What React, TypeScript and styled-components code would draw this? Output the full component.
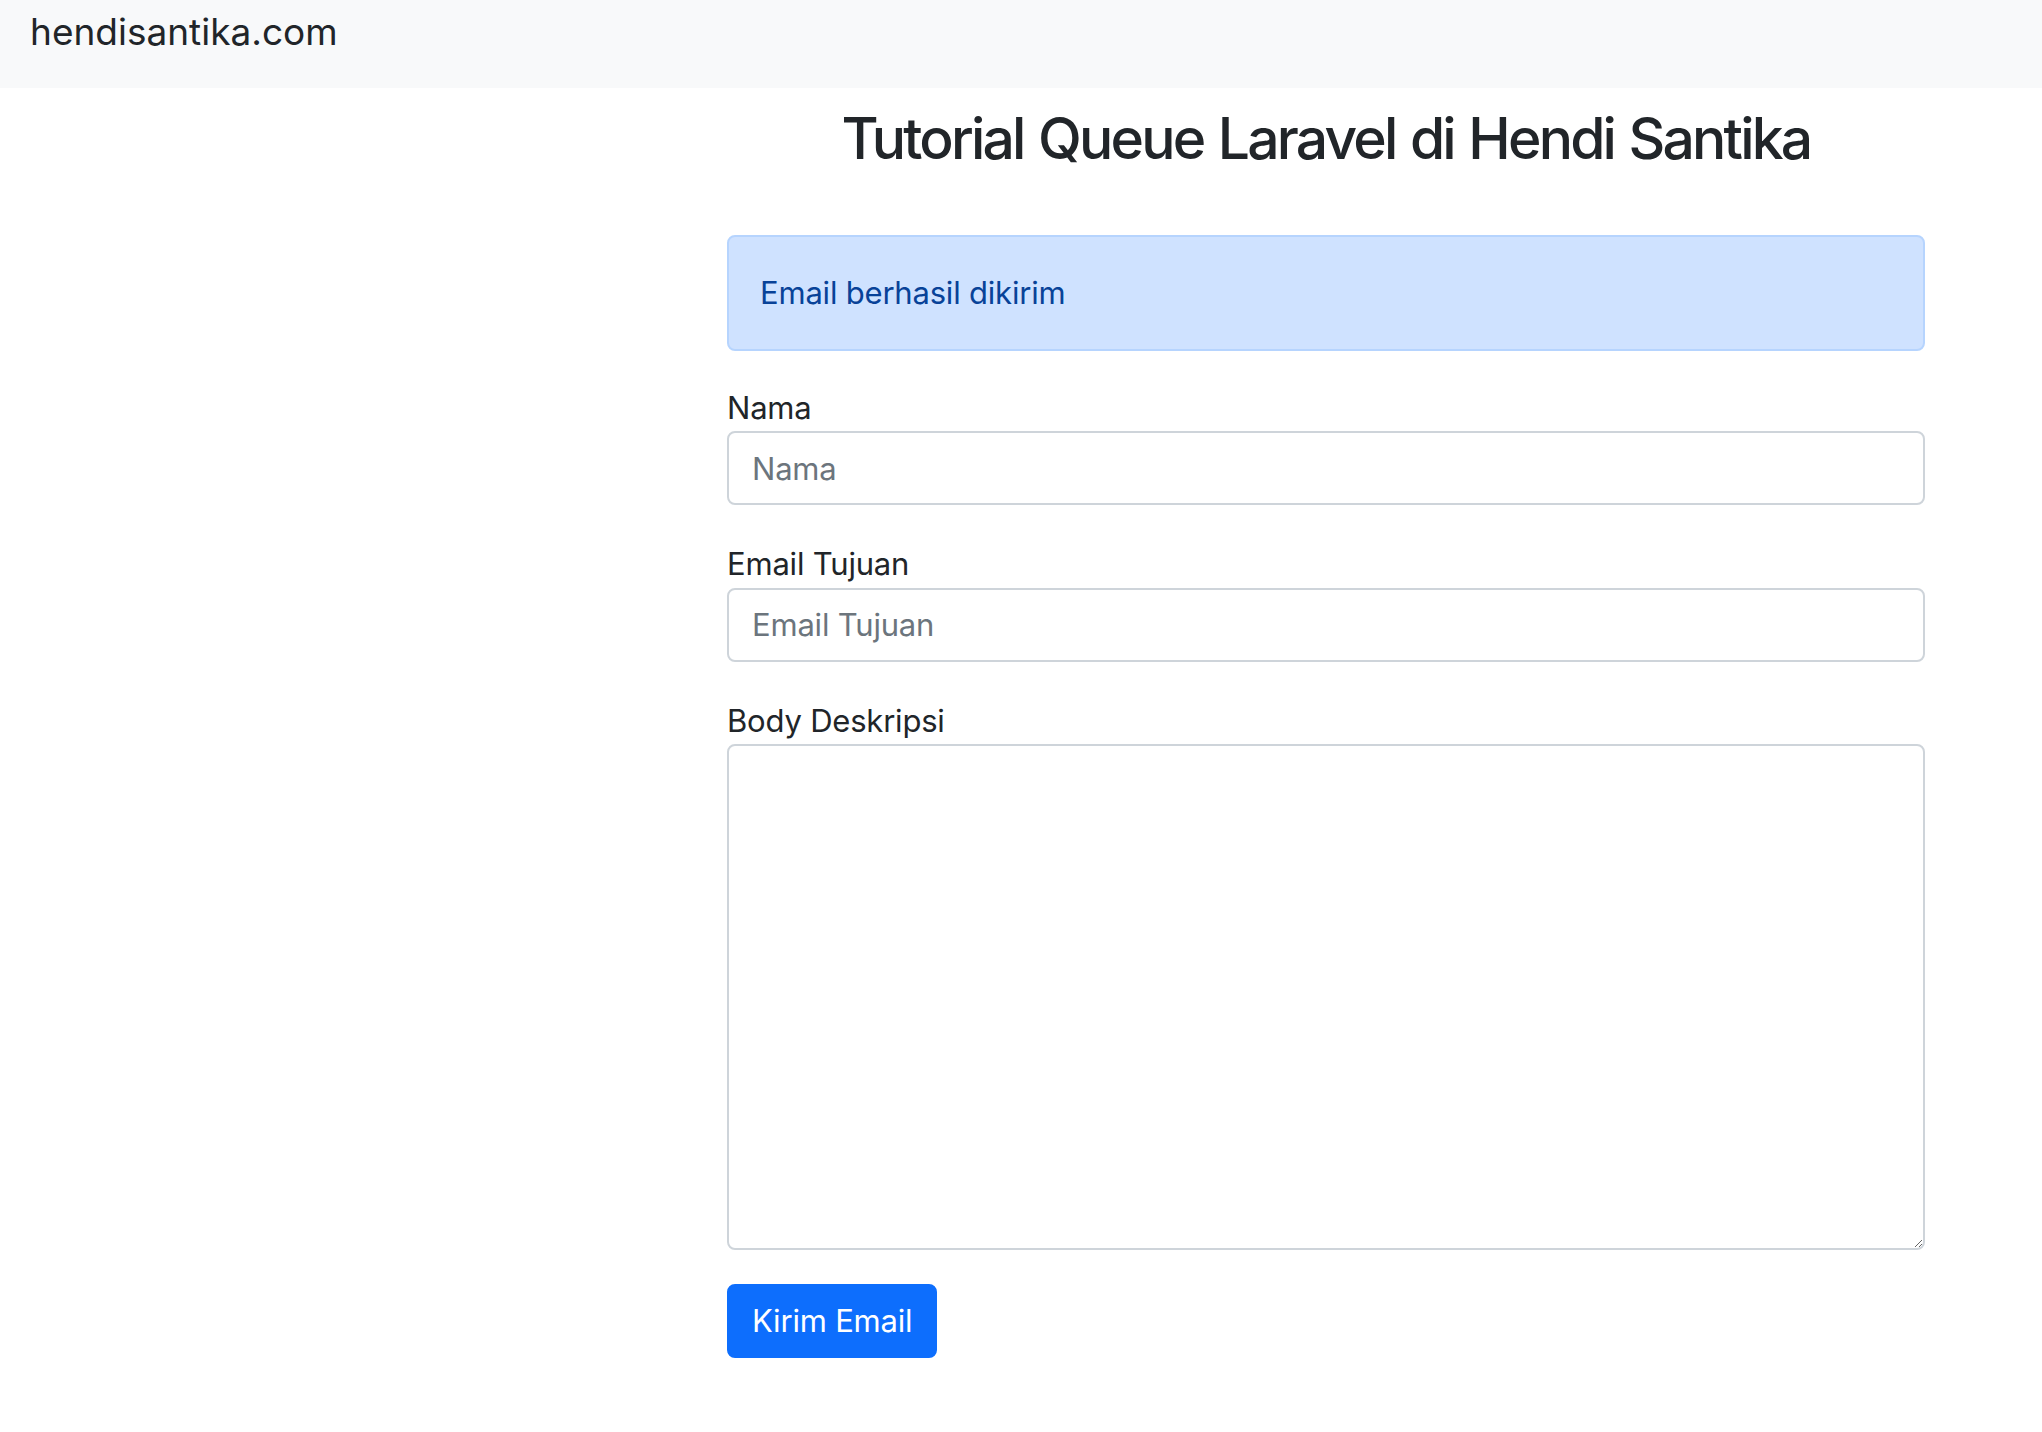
import React from "react";
import styled, { createGlobalStyle } from "styled-components";

const GlobalStyle = createGlobalStyle`
  *, *::before, *::after { box-sizing: border-box; }
  html, body { margin: 0; padding: 0; background: #ffffff; }
  body {
    font-family: Inter, "Noto Sans", "Liberation Sans", sans-serif;
    font-size: 31px;
    line-height: 1.5;
    color: #212529;
  }
`;

const Navbar = styled.nav`
  height: 88px;
  background: #f8f9fa;
  display: flex;
  align-items: flex-start;
  padding: 0 30px;
`;

const Brand = styled.a`
  font-size: 37px;
  line-height: 1;
  color: #212529;
  text-decoration: none;
  padding-top: 13px;
`;

const Container = styled.main`
  max-width: 1198px;
  margin: 0 117px 0 auto;
`;

const Column = styled.div`
  display: flex;
  flex-direction: column;
`;

const Title = styled.h2`
  margin: 17px 0 62px;
  text-align: center;
  font-size: 57px;
  font-weight: 500;
  line-height: 1.2;
  letter-spacing: -2.8px;
  word-spacing: 2px;
`;

const Alert = styled.div`
  background: #cfe2ff;
  border: 2px solid #b6d4fe;
  color: #084298;
  border-radius: 8px;
  padding: 33px 31px 32px;
  margin-bottom: 34px;
  letter-spacing: -0.2px;
`;

const Group = styled.div`
  margin-bottom: 36px;
`;

const Label = styled.label`
  display: block;
  letter-spacing: -0.2px;
`;

const Input = styled.input`
  display: block;
  width: 100%;
  height: 74px;
  padding: 11px 23px;
  font: inherit;
  letter-spacing: -0.2px;
  color: #212529;
  background: #ffffff;
  border: 2px solid #ced4da;
  border-radius: 8px;
  outline: none;
  &::placeholder { color: #6c757d; opacity: 1; }
`;

const TextArea = styled.textarea`
  display: block;
  width: 100%;
  height: 506px;
  padding: 11px 23px;
  font: inherit;
  color: #212529;
  background: #ffffff;
  border: 2px solid #ced4da;
  border-radius: 8px;
  outline: none;
  resize: vertical;
`;

const Button = styled.button`
  align-self: flex-start;
  margin-top: -2px;
  height: 74px;
  padding: 11px 23px;
  font: inherit;
  letter-spacing: -0.2px;
  color: #ffffff;
  background: #0d6efd;
  border: 2px solid #0d6efd;
  border-radius: 8px;
  cursor: pointer;
`;

const Form = styled.form`
  display: flex;
  flex-direction: column;
`;

export default function App() {
  return (
    <>
      <GlobalStyle />
      <Navbar>
        <Brand href="#">hendisantika.com</Brand>
      </Navbar>
      <Container>
        <Column>
          <Title>Tutorial Queue Laravel di Hendi Santika</Title>
          <Alert>Email berhasil dikirim</Alert>
          <Form onSubmit={(e) => e.preventDefault()}>
            <Group>
              <Label htmlFor="nama">Nama</Label>
              <Input id="nama" type="text" placeholder="Nama" />
            </Group>
            <Group>
              <Label htmlFor="email">Email Tujuan</Label>
              <Input id="email" type="email" placeholder="Email Tujuan" />
            </Group>
            <Group>
              <Label htmlFor="body">Body Deskripsi</Label>
              <TextArea id="body" />
            </Group>
            <Button type="submit">Kirim Email</Button>
          </Form>
        </Column>
      </Container>
    </>
  );
}
